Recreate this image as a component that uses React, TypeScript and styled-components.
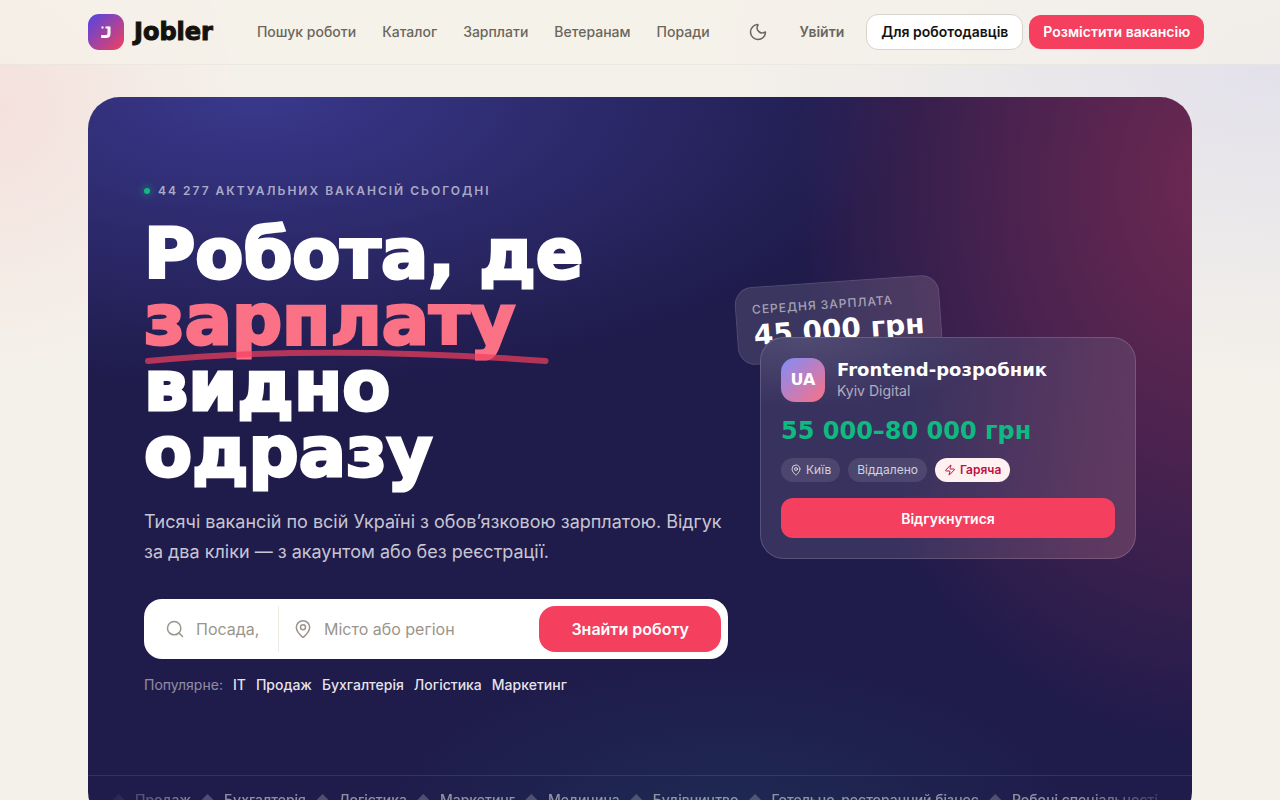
import React, { Fragment } from "react";
import styled, { createGlobalStyle, css } from "styled-components";
import { MapPin, Moon, Search, Zap } from "lucide-react";

const display = '"DejaVu Sans", Inter, sans-serif';
const body = 'Inter, "Noto Sans", sans-serif';
const rose = "#f43f5e";
const ink = "#14120f";

const GlobalStyle = createGlobalStyle`
  *, *::before, *::after { box-sizing: border-box; }
  body {
    margin: 0;
    color: ${ink};
    font: 400 14px/20px ${body};
    background:
      radial-gradient(240px 260px at 0 110px, rgba(244, 63, 94, 0.09), rgba(244, 63, 94, 0)),
      radial-gradient(560px 330px at 100% 60px, rgba(99, 102, 241, 0.12), rgba(99, 102, 241, 0)),
      #f4f1ea;
  }
  a { color: inherit; text-decoration: none; }
  button, input { font-family: inherit; }
`;

const Header = styled.header`
  position: sticky;
  top: 0;
  z-index: 5;
  border-bottom: 1px solid rgba(20, 18, 15, 0.04);
  background: rgba(245, 241, 234, 0.75);
`;

const Container = styled.div`
  max-width: 1152px;
  margin: 0 auto;
  padding: 0 24px;
`;

const HeaderRow = styled(Container)`
  display: flex;
  align-items: center;
  height: 64px;
  white-space: nowrap;
  > * { flex-shrink: 0; }
`;

const Brand = styled.a`
  display: flex;
  align-items: center;
  gap: 10px;
  font: 700 24px/28px ${display};
`;

const BrandMark = styled.span`
  display: grid;
  place-items: center;
  width: 36px;
  height: 36px;
  border-radius: 11px;
  background: linear-gradient(135deg, #4f46e5, ${rose});
`;

const BrandName = styled.span`
  -webkit-text-stroke: 1px currentColor;
`;

const Nav = styled.nav`
  display: flex;
  gap: 26px;
  margin-left: 44px;
  color: #6b665c;
  font-weight: 500;
`;

const Actions = styled.div`
  display: flex;
  align-items: center;
  gap: 6px;
  margin-left: 28px;
`;

const IconButton = styled.button`
  display: grid;
  place-items: center;
  width: 40px;
  height: 40px;
  padding: 0;
  border: 0;
  background: none;
  color: #6b665c;
`;

const HeaderLink = styled.a<{ $kind: "ghost" | "outline" | "solid" }>`
  padding: 7px 14px;
  border-radius: 12px;
  font-weight: 600;
  ${({ $kind }) =>
    $kind === "ghost"
      ? css`
          padding: 7px 16px;
          color: #6b665c;
        `
      : $kind === "outline"
      ? css`
          border: 1px solid #d8d3ca;
          background: #fff;
        `
      : css`
          background: ${rose};
          color: #fff;
        `}
`;

const Hero = styled.section`
  position: relative;
  overflow: hidden;
  margin: 32px 0;
  border-radius: 32px;
  color: #fff;
  background:
    radial-gradient(60% 40% at 15% 0, rgba(99, 102, 241, 0.39), rgba(99, 102, 241, 0)),
    radial-gradient(38% 78% at 102% 12%, rgba(244, 63, 94, 0.37), rgba(244, 63, 94, 0.2) 50%, rgba(244, 63, 94, 0)),
    radial-gradient(34% 24% at 58% 100%, rgba(20, 150, 140, 0.12), rgba(20, 150, 140, 0)),
    #1f1b4b;
`;

const HeroGrid = styled.div`
  display: grid;
  grid-template-columns: minmax(0, 73fr) minmax(0, 47fr);
  gap: 32px;
  align-items: center;
  padding: 84px 56px 80px;
`;

const Eyebrow = styled.p`
  display: flex;
  align-items: center;
  gap: 8px;
  margin: 0 0 20px;
  color: rgba(255, 255, 255, 0.6);
  font-size: 12px;
  font-weight: 600;
  letter-spacing: 2px;
  text-transform: uppercase;
`;

const LiveDot = styled.span`
  width: 6px;
  height: 6px;
  border-radius: 50%;
  background: #10b981;
  box-shadow: 0 0 8px #10b981;
`;

const Title = styled.h1`
  margin: 0 0 22px;
  font: 700 70px/66px ${display};
  -webkit-text-stroke: 3px currentColor;
`;

const Highlight = styled.span`
  position: relative;
  display: inline-block;
  color: #fb7185;
`;

const Underline = styled.svg`
  position: absolute;
  left: 0;
  bottom: -12px;
  width: 109%;
  height: 16px;
  overflow: visible;
`;

const Lead = styled.p`
  margin: 0;
  color: rgba(255, 255, 255, 0.75);
  font-size: 18px;
  line-height: 30px;
`;

const SearchBar = styled.form`
  display: flex;
  height: 60px;
  margin: 32px 0 16px;
  padding: 7px;
  border-radius: 18px;
  background: #fff;
`;

const Field = styled.label<{ $wide?: boolean }>`
  display: flex;
  flex: ${({ $wide }) => ($wide ? "1 1 0" : "0 0 127px")};
  align-items: center;
  gap: 11px;
  min-width: 0;
  padding: 0 14px;
  color: #9a958b;
  & + & { border-left: 1px solid #eeebe5; }
  svg { flex: none; }
`;

const FieldInput = styled.input`
  width: 100%;
  min-width: 0;
  padding: 0;
  border: 0;
  outline: 0;
  background: none;
  font-size: 16px;
  line-height: 24px;
  &::placeholder { color: #9a958b; opacity: 1; }
`;

const SubmitButton = styled.button`
  flex: none;
  padding: 0 32px;
  border: 0;
  border-radius: 16px;
  background: ${rose};
  color: #fff;
  font-size: 16px;
  font-weight: 600;
`;

const Popular = styled.div`
  display: flex;
  gap: 10px;
  color: rgba(255, 255, 255, 0.5);
  a { color: rgba(255, 255, 255, 0.9); font-weight: 500; }
`;

const Showcase = styled.div`
  position: relative;
  margin-top: 20px;
`;

const AverageCard = styled.div`
  position: absolute;
  top: -56px;
  left: -24px;
  padding: 12px 16px;
  border: 1px solid rgba(255, 255, 255, 0.1);
  border-radius: 18px;
  background: rgba(255, 255, 255, 0.12);
  white-space: nowrap;
  transform: rotate(-4deg);
`;

const AverageLabel = styled.div`
  color: rgba(255, 255, 255, 0.55);
  font-size: 12px;
  font-weight: 500;
  letter-spacing: 1px;
  text-transform: uppercase;
`;

const AverageValue = styled.div`
  font: 700 28px/32px ${display};
`;

const JobCard = styled.article`
  position: relative;
  padding: 20px;
  border: 1px solid rgba(255, 255, 255, 0.16);
  border-radius: 24px;
  background:
    radial-gradient(200px 70px at 12% 0, rgba(255, 255, 255, 0.12), rgba(255, 255, 255, 0)),
    linear-gradient(97deg, #38325f 0, #39325f 40%, #5b3860 85%, #603a61 100%);
  background-origin: border-box;
`;

const JobHead = styled.div`
  display: flex;
  align-items: center;
  gap: 12px;
`;

const Avatar = styled.span`
  display: grid;
  place-items: center;
  width: 44px;
  height: 44px;
  border-radius: 14px;
  background: linear-gradient(135deg, #818cf8, #fb7185);
  font: 700 16px/20px ${display};
`;

const JobTitle = styled.h2`
  margin: 0;
  font: 700 18px/22px ${display};
`;

const Company = styled.p`
  margin: 0;
  color: rgba(255, 255, 255, 0.6);
`;

const Salary = styled.p`
  margin: 14px 0 12px;
  color: #10b981;
  font: 700 24px/30px ${display};
`;

const Tags = styled.div`
  display: flex;
  gap: 8px;
  margin-bottom: 16px;
`;

const Tag = styled.span<{ $hot?: boolean }>`
  display: flex;
  align-items: center;
  gap: 4px;
  height: 24px;
  padding: 0 9px;
  border-radius: 12px;
  background: ${({ $hot }) => ($hot ? "#fff1f2" : "rgba(255, 255, 255, 0.1)")};
  color: ${({ $hot }) => ($hot ? "#be123c" : "rgba(255, 255, 255, 0.75)")};
  font-size: 12px;
  font-weight: ${({ $hot }) => ($hot ? 600 : 400)};
`;

const ApplyButton = styled.button`
  display: block;
  width: 100%;
  height: 40px;
  border: 0;
  border-radius: 12px;
  background: ${rose};
  color: #fff;
  font-size: 14px;
  font-weight: 600;
`;

const TickerBar = styled.div`
  border-top: 1px solid rgba(255, 255, 255, 0.1);
`;

const Ticker = styled.div`
  display: flex;
  gap: 12px;
  overflow: hidden;
  padding: 14px 26px;
  color: rgba(255, 255, 255, 0.5);
  font-weight: 500;
  white-space: nowrap;
  mask-image: linear-gradient(90deg, transparent, #000 10%, #000 90%, transparent);
`;

const Diamond = styled.span`
  display: flex;
  flex: none;
  justify-content: center;
  width: 9px;
  color: rgba(255, 255, 255, 0.22);
  font-size: 12px;
`;

const navItems = ["Пошук роботи", "Каталог", "Зарплати", "Ветеранам", "Поради"];
const popular = ["IT", "Продаж", "Бухгалтерія", "Логістика", "Маркетинг"];
const industries = ["Продаж", "Бухгалтерія", "Логістика", "Маркетинг", "Медицина", "Будівництво", "Готельно-ресторанний бізнес", "Робочі спеціальності"];

export default function App() {
  return (
    <>
      <GlobalStyle />
      <Header>
        <HeaderRow>
          <Brand href="#">
            <BrandMark>
              <svg width="12" height="14" viewBox="0 0 12 14" fill="none" stroke="#fff" strokeWidth="3" aria-hidden="true">
                <path d="M9 1.500v7c0 2-1 3-3 3H1.200" />
                <path d="M1.500 2.500h2" strokeWidth="2" />
                <path d="M5.500 2.500h3" strokeWidth="2" />
              </svg>
            </BrandMark>
            <BrandName>Jobler</BrandName>
          </Brand>
          <Nav>
            {navItems.map((item) => (
              <a href="#" key={item}>{item}</a>
            ))}
          </Nav>
          <Actions>
            <IconButton type="button" aria-label="Темна тема"><Moon size={20} strokeWidth={1.8} /></IconButton>
            <HeaderLink href="#" $kind="ghost">Увійти</HeaderLink>
            <HeaderLink href="#" $kind="outline">Для роботодавців</HeaderLink>
            <HeaderLink href="#" $kind="solid">Розмістити вакансію</HeaderLink>
          </Actions>
        </HeaderRow>
      </Header>
      <Container as="main">
        <Hero>
          <HeroGrid>
            <div>
              <Eyebrow><LiveDot />44 277 актуальних вакансій сьогодні</Eyebrow>
              <Title>
                Робота, де<br />
                <Highlight>
                  зарплату
                  <Underline viewBox="0 0 400 16" preserveAspectRatio="none" aria-hidden="true">
                    <path d="M4 12C110 1 250 1 397 12" fill="none" stroke={rose} strokeOpacity="0.7" strokeWidth="6" strokeLinecap="round" />
                  </Underline>
                </Highlight><br />
                видно<br />
                одразу
              </Title>
              <Lead>Тисячі вакансій по всій Україні з обов’язковою зарплатою. Відгук за два кліки — з акаунтом або без реєстрації.</Lead>
              <SearchBar>
                <Field>
                  <Search size={20} strokeWidth={1.8} />
                  <FieldInput placeholder="Посада, компанія" aria-label="Посада" />
                </Field>
                <Field $wide>
                  <MapPin size={20} strokeWidth={1.8} />
                  <FieldInput placeholder="Місто або регіон" aria-label="Місто або регіон" />
                </Field>
                <SubmitButton type="button">Знайти роботу</SubmitButton>
              </SearchBar>
              <Popular>
                <span>Популярне:</span>
                {popular.map((item) => (
                  <a href="#" key={item}>{item}</a>
                ))}
              </Popular>
            </div>
            <Showcase>
              <AverageCard>
                <AverageLabel>Середня зарплата</AverageLabel>
                <AverageValue>45 000 грн</AverageValue>
              </AverageCard>
              <JobCard>
                <JobHead>
                  <Avatar>UA</Avatar>
                  <div>
                    <JobTitle>Frontend-розробник</JobTitle>
                    <Company>Kyiv Digital</Company>
                  </div>
                </JobHead>
                <Salary>55 000–80 000 грн</Salary>
                <Tags>
                  <Tag><MapPin size={12} />Київ</Tag>
                  <Tag>Віддалено</Tag>
                  <Tag $hot><Zap size={12} />Гаряча</Tag>
                </Tags>
                <ApplyButton type="button">Відгукнутися</ApplyButton>
              </JobCard>
            </Showcase>
          </HeroGrid>
          <TickerBar>
            <Ticker>
              {industries.map((item) => (
                <Fragment key={item}>
                  <Diamond aria-hidden="true">◆</Diamond>
                  <span>{item}</span>
                </Fragment>
              ))}
            </Ticker>
          </TickerBar>
        </Hero>
      </Container>
    </>
  );
}
